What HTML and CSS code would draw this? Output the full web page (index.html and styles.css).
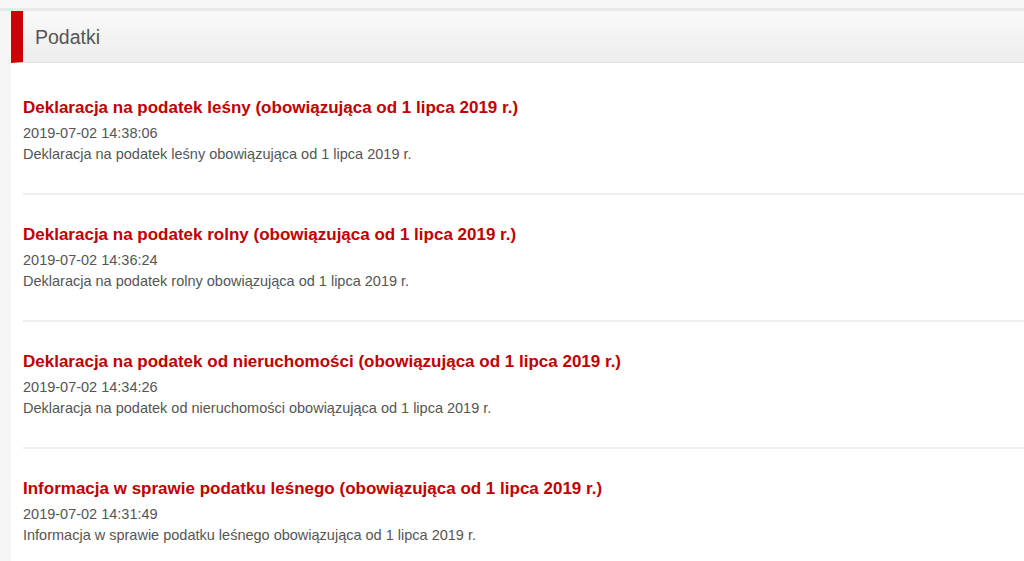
FILE: index.html
```html
<!DOCTYPE html>
<html lang="pl">
<head>
<meta charset="utf-8">
<title>Podatki</title>
<link rel="stylesheet" href="styles.css">
</head>
<body>
<div class="topbar"></div>
<div class="main">
  <div class="gutter"></div>
  <section class="panel">
    <header class="panel-head"><h1>Podatki</h1></header>
    <ul class="list">
      <li class="item">
        <a class="title" href="#">Deklaracja na podatek leśny (obowiązująca od 1 lipca 2019 r.)</a>
        <div class="date">2019-07-02 14:38:06</div>
        <p class="desc">Deklaracja na podatek leśny obowiązująca od 1 lipca 2019 r.</p>
      </li>
      <li class="item">
        <a class="title" href="#">Deklaracja na podatek rolny (obowiązująca od 1 lipca 2019 r.)</a>
        <div class="date">2019-07-02 14:36:24</div>
        <p class="desc">Deklaracja na podatek rolny obowiązująca od 1 lipca 2019 r.</p>
      </li>
      <li class="item">
        <a class="title" href="#">Deklaracja na podatek od nieruchomości (obowiązująca od 1 lipca 2019 r.)</a>
        <div class="date">2019-07-02 14:34:26</div>
        <p class="desc">Deklaracja na podatek od nieruchomości obowiązująca od 1 lipca 2019 r.</p>
      </li>
      <li class="item">
        <a class="title" href="#">Informacja w sprawie podatku leśnego (obowiązująca od 1 lipca 2019 r.)</a>
        <div class="date">2019-07-02 14:31:49</div>
        <p class="desc">Informacja w sprawie podatku leśnego obowiązująca od 1 lipca 2019 r.</p>
      </li>
    </ul>
  </section>
</div>
</body>
</html>
```

FILE: styles.css
```css
html, body {
  margin: 0;
  padding: 0;
  background: #f5f5f5;
  font-family: "Liberation Sans", Arial, sans-serif;
}
.topbar {
  height: 8px;
  background: #f7f7f7;
  border-bottom: 3px solid #e9e9e9;
}
.main {
  display: flex;
}
.gutter {
  width: 11px;
  flex: none;
  background: #f5f5f5;
}
.panel {
  flex: 1;
  background: #fff;
  min-height: 560px;
}
.panel-head {
  height: 51px;
  display: flex;
  align-items: center;
  border-left: 12px solid #cc0000;
  border-bottom: 1px solid #e3e3e3;
  background: linear-gradient(#f9f9f9, #ededed);
  padding-left: 12px;
}
.panel-head h1 {
  margin: 2px 0 0;
  font-size: 19.5px;
  font-weight: normal;
  color: #555;
}
.list {
  list-style: none;
  margin: 5px 0 0;
  padding: 0 0 0 12px;
}
.item {
  padding: 30px 0 29px;
  border-bottom: 2px solid #eeeeee;
}
.title {
  display: block;
  font-size: 17px;
  line-height: 20px;
  font-weight: bold;
  color: #c00000;
  text-decoration: none;
}
.date {
  margin-top: 5px;
  font-size: 14.5px;
  line-height: 20px;
  color: #555;
}
.desc {
  margin: 1px 0 0;
  font-size: 14.5px;
  line-height: 20px;
  color: #555;
}
```
